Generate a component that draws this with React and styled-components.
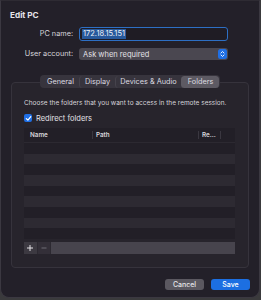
import React from 'react';
import styled, { createGlobalStyle } from 'styled-components';

const GlobalStyle = createGlobalStyle`
  html, body {
    margin: 0;
    padding: 0;
    background: #3a3a3c;
  }
  body {
    font-family: Inter, "Liberation Sans", Arial, sans-serif;
    -webkit-font-smoothing: antialiased;
  }
`;

const Window = styled.div`
  box-sizing: border-box;
  width: 260px;
  height: 298px;
  background: #232029;
  border: 1px solid #3b3841;
  border-top-color: #2e2b33;
  border-radius: 0 0 9px 9px;
  display: flex;
  flex-direction: column;
  color: #e6e4e8;
`;

const Title = styled.div`
  font-size: 8.2px;
  font-weight: 700;
  margin: 8px 0 0 9px;
  height: 13px;
  line-height: 13px;
  flex: none;
`;

const Form = styled.div`
  display: grid;
  grid-template-columns: 72px 150px;
  grid-template-rows: 14px 12px;
  column-gap: 5px;
  row-gap: 7px;
  align-items: center;
  margin-top: 5px;
  flex: none;
`;

const Label = styled.div`
  font-size: 7.3px;
  line-height: 10px;
  text-align: right;
  color: #d8d6dc;
`;

const TextField = styled.div`
  box-sizing: border-box;
  height: 14px;
  margin-left: 1px;
  border: 1.5px solid #2d6fc4;
  border-radius: 3px;
  background: #1f1c24;
  display: flex;
  align-items: center;
  padding-left: 2px;
  font-size: 7.5px;
`;

const Selected = styled.span`
  background: #27589b;
  color: #eef2f8;
  padding: 0 1px;
  line-height: 10px;
`;

const Popup = styled.div`
  box-sizing: border-box;
  height: 12px;
  margin-left: 1px;
  width: 149px;
  border-radius: 3px;
  background: #4a4750;
  display: flex;
  align-items: center;
  justify-content: space-between;
  padding-left: 4px;
  font-size: 7.5px;
  color: #e3e1e6;
`;

const Stepper = styled.div`
  width: 9px;
  height: 10px;
  margin-right: 1px;
  border-radius: 2.5px;
  background: #1f6fe5;
  display: flex;
  align-items: center;
  justify-content: center;
`;

const Group = styled.div`
  display: flex;
  flex-direction: column;
  margin-top: 15px;
  flex: none;
`;

const TabBar = styled.div`
  box-sizing: border-box;
  align-self: center;
  display: flex;
  align-items: center;
  height: 13px;
  border-radius: 4px;
  background: #37343d;
  padding: 0 1px;
  margin-bottom: -6px;
  position: relative;
  z-index: 1;
`;

const Tab = styled.div`
  box-sizing: border-box;
  display: flex;
  align-items: center;
  justify-content: center;
  height: 12px;
  width: ${(p) => p.w}px;
  font-size: 7.3px;
  border-radius: 3.5px;
  color: #dcdae0;
  background: ${(p) => (p.active ? '#5d5a63' : 'transparent')};
  border-left: 1px solid ${(p) => (p.sep ? '#46434c' : 'transparent')};
`;

const Box = styled.div`
  box-sizing: border-box;
  margin: 0 10px;
  height: 186px;
  border: 1px solid #36333c;
  border-radius: 4px;
  background: #27242c;
  padding: 15px 13px 0 12px;
  display: flex;
  flex-direction: column;
`;

const Description = styled.div`
  font-size: 6.5px;
  white-space: nowrap;
  color: #d6d4da;
  height: 10px;
  line-height: 10px;
`;

const CheckRow = styled.div`
  display: flex;
  align-items: center;
  gap: 4px;
  margin-top: 4px;
  font-size: 7.5px;
  color: #e3e1e6;
  height: 12px;
`;

const Checkbox = styled.div`
  width: 8px;
  height: 8px;
  border-radius: 2px;
  background: #1f6fe5;
  display: flex;
  align-items: center;
  justify-content: center;
`;

const Table = styled.div`
  margin-top: 4px;
  display: flex;
  flex-direction: column;
  background: #221f27;
`;

const HeaderRow = styled.div`
  display: grid;
  grid-template-columns: 69px 106px 22px 1fr;
  height: 14px;
  align-items: center;
  border-bottom: 1px solid #2c2931;
  font-size: 6.3px;
  font-weight: 600;
  color: #d8d6dc;
`;

const HeaderCell = styled.div`
  padding-left: ${(p) => p.pl || 3}px;
  height: 8px;
  line-height: 8px;
  border-right: ${(p) => (p.last ? 'none' : '1px solid #3a3740')};
  overflow: hidden;
`;

const Row = styled.div`
  height: 10.67px;
  background: ${(p) => (p.odd ? '#2d2a32' : '#221f27')};
`;

const BottomBar = styled.div`
  margin-top: 3px;
  height: 12px;
  display: flex;
  background: #47444d;
`;

const BarButton = styled.div`
  width: 12.5px;
  display: flex;
  align-items: center;
  justify-content: center;
  background: ${(p) => (p.dim ? '#332f38' : '#3c3941')};
  border-right: 0.5px solid #2c2931;
`;

const Buttons = styled.div`
  display: flex;
  justify-content: flex-end;
  gap: 7px;
  margin: 11px 9px 0 0;
  flex: none;
`;

const Button = styled.div`
  width: 39px;
  height: 11px;
  border-radius: 3px;
  display: flex;
  align-items: center;
  justify-content: center;
  font-size: 7px;
  font-weight: 500;
  color: ${(p) => (p.primary ? '#ffffff' : '#e6e4e8')};
  background: ${(p) => (p.primary ? '#1c6fe2' : '#5b5860')};
`;

const tabs = [
  { label: 'General', w: 38 },
  { label: 'Display', w: 36 },
  { label: 'Devices & Audio', w: 66 },
  { label: 'Folders', w: 38, active: true },
];

export default function App() {
  return (
    <>
      <GlobalStyle />
      <Window>
        <Title>Edit PC</Title>
        <Form>
          <Label>PC name:</Label>
          <TextField>
            <Selected>172.18.15.151</Selected>
          </TextField>
          <Label>User account:</Label>
          <Popup>
            Ask when required
            <Stepper>
              <svg width="5" height="8" viewBox="0 0 5 8">
                <path d="M1 3 L2.5 1.5 L4 3 M1 5 L2.5 6.5 L4 5" fill="none" stroke="#fff" strokeWidth="0.9" strokeLinecap="round" strokeLinejoin="round" />
              </svg>
            </Stepper>
          </Popup>
        </Form>
        <Group>
          <TabBar>
            {tabs.map((t, i) => (
              <Tab key={t.label} w={t.w} active={t.active} sep={i > 0 && !t.active && !tabs[i - 1].active}>
                {t.label}
              </Tab>
            ))}
          </TabBar>
          <Box>
            <Description>Choose the folders that you want to access in the remote session.</Description>
            <CheckRow>
              <Checkbox>
                <svg width="7" height="7" viewBox="0 0 7 7">
                  <path d="M1.3 3.6 L2.9 5.2 L5.8 1.6" fill="none" stroke="#fff" strokeWidth="1.2" strokeLinecap="round" strokeLinejoin="round" />
                </svg>
              </Checkbox>
              Redirect folders
            </CheckRow>
            <Table>
              <HeaderRow>
                <HeaderCell pl={6}>Name</HeaderCell>
                <HeaderCell>Path</HeaderCell>
                <HeaderCell>Re...</HeaderCell>
                <HeaderCell last />
              </HeaderRow>
              {Array.from({ length: 9 }).map((_, i) => (
                <Row key={i} odd={i % 2 === 1} />
              ))}
            </Table>
            <BottomBar>
              <BarButton>
                <svg width="8" height="8" viewBox="0 0 8 8">
                  <path d="M4 1 V7 M1 4 H7" stroke="#e6e4e8" strokeWidth="1" />
                </svg>
              </BarButton>
              <BarButton dim>
                <svg width="8" height="8" viewBox="0 0 8 8">
                  <path d="M1.5 4 H6.5" stroke="#6f6c75" strokeWidth="1" />
                </svg>
              </BarButton>
            </BottomBar>
          </Box>
        </Group>
        <Buttons>
          <Button>Cancel</Button>
          <Button primary>Save</Button>
        </Buttons>
      </Window>
    </>
  );
}
